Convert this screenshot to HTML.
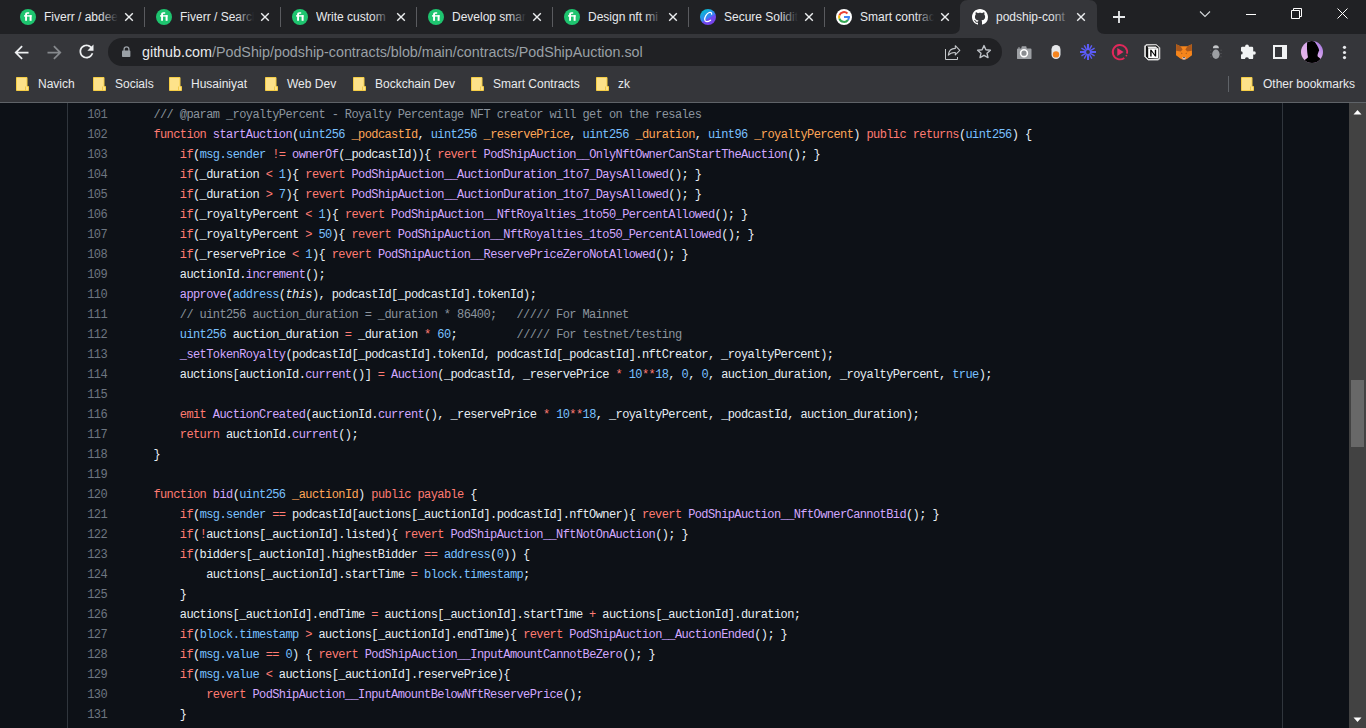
<!DOCTYPE html>
<html><head><meta charset="utf-8"><title>podship</title><style>
*{margin:0;padding:0;box-sizing:border-box}
html,body{width:1366px;height:728px;overflow:hidden;background:#0d1117;font-family:"Liberation Sans",sans-serif}
.ico{position:absolute;display:block}
#tabs{position:absolute;left:0;top:0;width:1366px;height:34px;background:#202124}
#toolbar{position:absolute;left:0;top:34px;width:1366px;height:35px;background:#35363a}
#bm{position:absolute;left:0;top:69px;width:1366px;height:33px;background:#35363a}
#omni{position:absolute;left:108px;top:38px;width:894px;height:28px;border-radius:14px;background:#202124}
#url{position:absolute;left:142px;top:43px;height:18px;line-height:18px;font-size:14.3px;color:#9aa0a6;white-space:nowrap}
.tt{position:absolute;top:9px;width:74px;height:16px;line-height:16px;font-size:12px;color:#e8eaed;white-space:nowrap;overflow:hidden}
.tt i{position:absolute;right:0;top:0;width:18px;height:16px}
.tsep{position:absolute;top:7px;width:1px;height:20px;background:#5a5b5f}
.bt{position:absolute;top:76px;height:16px;line-height:16px;font-size:12px;color:#e8eaed;white-space:nowrap}
.ln{position:absolute;left:67px;width:40px;height:20px;line-height:20px;text-align:right;font-family:"Liberation Mono",monospace;font-size:12px;letter-spacing:-0.6px;color:#6e7681;white-space:pre}
.cl{position:absolute;left:127px;height:20px;line-height:20px;font-family:"Liberation Mono",monospace;font-size:12px;letter-spacing:-0.6px;color:#e6edf3;white-space:pre}
.k{color:#ff7b72}.f{color:#d2a8ff}.c{color:#79c0ff}.v{color:#ffa657}.m{color:#8b949e}.i{font-style:italic}
</style></head><body>
<div id="tabs"></div>
<svg class="ico" style="left:0;top:0" width="1366" height="34"><path d="M952 34Q960 34 960 26L960 8Q960 0 968 0L1089 0Q1097 0 1097 8L1097 26Q1097 34 1105 34Z" fill="#35363a"/></svg>
<svg class="ico" style="left:20px;top:9px" width="16" height="16" viewBox="0 0 16 16"><circle cx="8" cy="8" r="8" fill="#1ec46f"/><path d="M5.1 11.8V5.3C5.1 4 5.9 3.3 7.2 3.3H9.2V4.8H7.6C7.2 4.8 7 5 7 5.4V11.8Z" fill="#fff"/><rect x="4" y="6.2" width="7.6" height="1.4" fill="#fff"/><rect x="9.6" y="6.2" width="2" height="5.6" fill="#fff"/></svg>
<div class="tt" style="left:44px">Fiverr / abdee<i style="background:linear-gradient(90deg,rgba(32,33,36,0),#202124)"></i></div>
<svg class="ico" style="left:123px;top:11px" width="12" height="12" viewBox="0 0 12 12"><path d="M2.7 2.7L9.3 9.3M9.3 2.7L2.7 9.3" stroke="#eceef0" stroke-width="1.4" stroke-linecap="square"/></svg>
<div class="tsep" style="left:144px"></div>
<svg class="ico" style="left:156px;top:9px" width="16" height="16" viewBox="0 0 16 16"><circle cx="8" cy="8" r="8" fill="#1ec46f"/><path d="M5.1 11.8V5.3C5.1 4 5.9 3.3 7.2 3.3H9.2V4.8H7.6C7.2 4.8 7 5 7 5.4V11.8Z" fill="#fff"/><rect x="4" y="6.2" width="7.6" height="1.4" fill="#fff"/><rect x="9.6" y="6.2" width="2" height="5.6" fill="#fff"/></svg>
<div class="tt" style="left:180px">Fiverr / Search<i style="background:linear-gradient(90deg,rgba(32,33,36,0),#202124)"></i></div>
<svg class="ico" style="left:259px;top:11px" width="12" height="12" viewBox="0 0 12 12"><path d="M2.7 2.7L9.3 9.3M9.3 2.7L2.7 9.3" stroke="#eceef0" stroke-width="1.4" stroke-linecap="square"/></svg>
<div class="tsep" style="left:280px"></div>
<svg class="ico" style="left:292px;top:9px" width="16" height="16" viewBox="0 0 16 16"><circle cx="8" cy="8" r="8" fill="#1ec46f"/><path d="M5.1 11.8V5.3C5.1 4 5.9 3.3 7.2 3.3H9.2V4.8H7.6C7.2 4.8 7 5 7 5.4V11.8Z" fill="#fff"/><rect x="4" y="6.2" width="7.6" height="1.4" fill="#fff"/><rect x="9.6" y="6.2" width="2" height="5.6" fill="#fff"/></svg>
<div class="tt" style="left:316px">Write custom<i style="background:linear-gradient(90deg,rgba(32,33,36,0),#202124)"></i></div>
<svg class="ico" style="left:395px;top:11px" width="12" height="12" viewBox="0 0 12 12"><path d="M2.7 2.7L9.3 9.3M9.3 2.7L2.7 9.3" stroke="#eceef0" stroke-width="1.4" stroke-linecap="square"/></svg>
<div class="tsep" style="left:416px"></div>
<svg class="ico" style="left:428px;top:9px" width="16" height="16" viewBox="0 0 16 16"><circle cx="8" cy="8" r="8" fill="#1ec46f"/><path d="M5.1 11.8V5.3C5.1 4 5.9 3.3 7.2 3.3H9.2V4.8H7.6C7.2 4.8 7 5 7 5.4V11.8Z" fill="#fff"/><rect x="4" y="6.2" width="7.6" height="1.4" fill="#fff"/><rect x="9.6" y="6.2" width="2" height="5.6" fill="#fff"/></svg>
<div class="tt" style="left:452px">Develop smar<i style="background:linear-gradient(90deg,rgba(32,33,36,0),#202124)"></i></div>
<svg class="ico" style="left:531px;top:11px" width="12" height="12" viewBox="0 0 12 12"><path d="M2.7 2.7L9.3 9.3M9.3 2.7L2.7 9.3" stroke="#eceef0" stroke-width="1.4" stroke-linecap="square"/></svg>
<div class="tsep" style="left:552px"></div>
<svg class="ico" style="left:564px;top:9px" width="16" height="16" viewBox="0 0 16 16"><circle cx="8" cy="8" r="8" fill="#1ec46f"/><path d="M5.1 11.8V5.3C5.1 4 5.9 3.3 7.2 3.3H9.2V4.8H7.6C7.2 4.8 7 5 7 5.4V11.8Z" fill="#fff"/><rect x="4" y="6.2" width="7.6" height="1.4" fill="#fff"/><rect x="9.6" y="6.2" width="2" height="5.6" fill="#fff"/></svg>
<div class="tt" style="left:588px">Design nft mi<i style="background:linear-gradient(90deg,rgba(32,33,36,0),#202124)"></i></div>
<svg class="ico" style="left:667px;top:11px" width="12" height="12" viewBox="0 0 12 12"><path d="M2.7 2.7L9.3 9.3M9.3 2.7L2.7 9.3" stroke="#eceef0" stroke-width="1.4" stroke-linecap="square"/></svg>
<div class="tsep" style="left:688px"></div>
<svg class="ico" style="left:700px;top:9px" width="16" height="16" viewBox="0 0 16 16"><defs><linearGradient id="cg" x1="0.2" y1="0" x2="0.8" y2="1"><stop offset="0" stop-color="#00c4cc"/><stop offset=".55" stop-color="#3d7cf5"/><stop offset=".6" stop-color="#6d4cf0"/><stop offset="1" stop-color="#7a3ee8"/></linearGradient></defs><circle cx="8" cy="8" r="8" fill="url(#cg)"/><path d="M11.6 5.2C11.9 3.6 10.6 2.9 9.2 3.5C6.6 4.6 4.4 8.2 4.7 10.8C5 13.2 7.8 13.1 10.6 11.2" fill="none" stroke="#fff" stroke-width="1.25" stroke-linecap="round"/></svg>
<div class="tt" style="left:724px">Secure Solidit<i style="background:linear-gradient(90deg,rgba(32,33,36,0),#202124)"></i></div>
<svg class="ico" style="left:803px;top:11px" width="12" height="12" viewBox="0 0 12 12"><path d="M2.7 2.7L9.3 9.3M9.3 2.7L2.7 9.3" stroke="#eceef0" stroke-width="1.4" stroke-linecap="square"/></svg>
<div class="tsep" style="left:824px"></div>
<svg class="ico" style="left:836px;top:9px" width="16" height="16" viewBox="0 0 16 16"><circle cx="8" cy="8" r="8" fill="#fff"/><g fill="none" stroke-width="2"><path d="M11.46 4.54A4.9 4.9 0 0 0 3.40 6.32" stroke="#ea4335"/><path d="M3.40 6.32A4.9 4.9 0 0 0 3.40 9.68" stroke="#fbbc05"/><path d="M3.40 9.68A4.9 4.9 0 0 0 12.01 10.81" stroke="#34a853"/><path d="M12.01 10.81A4.9 4.9 0 0 0 12.9 8" stroke="#4285f4"/></g><rect x="8" y="7" width="5.9" height="2" fill="#4285f4"/></svg>
<div class="tt" style="left:860px">Smart contrac<i style="background:linear-gradient(90deg,rgba(32,33,36,0),#202124)"></i></div>
<svg class="ico" style="left:939px;top:11px" width="12" height="12" viewBox="0 0 12 12"><path d="M2.7 2.7L9.3 9.3M9.3 2.7L2.7 9.3" stroke="#eceef0" stroke-width="1.4" stroke-linecap="square"/></svg>
<svg class="ico" style="left:972px;top:9px" width="16" height="16" viewBox="0 0 16 16"><path fill="#fff" d="M8 0C3.58 0 0 3.58 0 8c0 3.54 2.29 6.53 5.47 7.59.4.07.55-.17.55-.38 0-.19-.01-.82-.01-1.49-2.01.37-2.53-.49-2.69-.94-.09-.23-.48-.94-.82-1.13-.28-.15-.68-.52-.01-.53.63-.01 1.08.58 1.23.82.72 1.21 1.87.87 2.33.66.07-.52.28-.87.51-1.07-1.78-.2-3.64-.89-3.64-3.95 0-.87.31-1.59.82-2.15-.08-.2-.36-1.02.08-2.12 0 0 .67-.21 2.2.82.64-.18 1.32-.27 2-.27.68 0 1.36.09 2 .27 1.53-1.04 2.2-.82 2.2-.82.44 1.1.16 1.92.08 2.12.51.56.82 1.27.82 2.15 0 3.07-1.87 3.75-3.65 3.95.29.25.54.73.54 1.48 0 1.07-.01 1.93-.01 2.2 0 .21.15.46.55.38A8.013 8.013 0 0016 8c0-4.42-3.58-8-8-8z"/></svg>
<div class="tt" style="left:996px">podship-cont<i style="background:linear-gradient(90deg,rgba(53,54,58,0),#35363a)"></i></div>
<svg class="ico" style="left:1075px;top:11px" width="12" height="12" viewBox="0 0 12 12"><path d="M2.7 2.7L9.3 9.3M9.3 2.7L2.7 9.3" stroke="#eceef0" stroke-width="1.4" stroke-linecap="square"/></svg>
<svg class="ico" style="left:1112px;top:10px" width="14" height="14" viewBox="0 0 14 14"><path d="M7 1V13M1 7H13" stroke="#e8eaed" stroke-width="1.8"/></svg>
<svg class="ico" style="left:1199px;top:10px" width="12" height="8" viewBox="0 0 12 8"><path d="M1 1.5L6 6.5L11 1.5" fill="none" stroke="#d5d8db" stroke-width="1.1"/></svg>
<div style="position:absolute;left:1246px;top:14px;width:10px;height:1px;background:#fff"></div>
<svg class="ico" style="left:1291px;top:8px" width="12" height="12" viewBox="0 0 12 12"><path d="M0.5 2.5H8.5V10.5H0.5Z M2.5 2.5V0.5H10.5V8.5H8.5" fill="none" stroke="#fff" stroke-width="1"/></svg>
<svg class="ico" style="left:1337px;top:8px" width="12" height="12" viewBox="0 0 12 12"><path d="M0.5 0.5L10.5 10.5M10.5 0.5L0.5 10.5" stroke="#fff" stroke-width="1"/></svg>
<div id="toolbar"></div>
<svg class="ico" style="left:11px;top:41.6px" width="21" height="21" viewBox="0 0 24 24"><path d="M20 11H7.83l5.59-5.59L12 4l-8 8 8 8 1.41-1.41L7.83 13H20v-2z" fill="#eef0f2"/></svg>
<svg class="ico" style="left:44px;top:41.6px" width="21" height="21" viewBox="0 0 24 24"><path d="M12 4l-1.41 1.41L16.17 11H4v2h12.17l-5.58 5.59L12 20l8-8z" fill="#86898d"/></svg>
<svg class="ico" style="left:75.9px;top:41.4px" width="21" height="21" viewBox="0 0 24 24"><path d="M17.65 6.35C16.2 4.9 14.21 4 12 4c-4.42 0-7.99 3.58-7.99 8s3.57 8 7.99 8c3.73 0 6.840-2.550 7.730-6h-2.080c-.820 2.330-3.040 4-5.650 4-3.310 0-6-2.690-6-6s2.690-6 6-6c1.660 0 3.140.690 4.220 1.780L13 11h7V4l-2.350 2.350z" fill="#eef0f2"/></svg>
<div id="omni"></div>
<svg class="ico" style="left:121.8px;top:46px" width="9" height="11" viewBox="0 0 9 11"><path d="M2.1 5V3.3A2.4 2.4 0 0 1 6.9 3.3V5" fill="none" stroke="#9aa0a6" stroke-width="1.3"/><rect x="0" y="4.6" width="8.4" height="6.4" rx=".8" fill="#9aa0a6"/></svg>
<div id="url"><span style="color:#e8eaed">github.com</span>/PodShip/podship-contracts/blob/main/contracts/PodShipAuction.sol</div>
<svg class="ico" style="left:940px;top:40px" width="24" height="24" viewBox="0 0 24 24"><path d="M5.5 9V19.5H17.5V17" fill="none" stroke="#c4c7ca" stroke-width="1"/><path d="M8.3 15.2C8.8 11 11.5 8.4 15.3 8.4V5.7L19.8 10.3L15.3 14.9V12.5C12.3 12.3 10 13.2 8.3 15.2Z" fill="none" stroke="#c4c7ca" stroke-width="1.1" stroke-linejoin="round"/></svg>
<svg class="ico" style="left:976px;top:44px" width="16" height="16" viewBox="0 0 16 16"><path d="M8 1.6L9.9 5.8L14.4 6.2L11 9.2L12 13.6L8 11.3L4 13.6L5 9.2L1.6 6.2L6.1 5.8Z" fill="none" stroke="#bdc1c6" stroke-width="1.4" stroke-linejoin="round"/></svg>
<svg class="ico" style="left:1012px;top:40px" width="24" height="24" viewBox="0 0 24 24"><path d="M5 9.6Q5 8.6 6 8.6H9.2L9.8 6.2H14.2L14.8 8.6H18.5Q19.5 8.6 19.5 9.6V18.2Q19.5 19.1 18.5 19.1H6Q5 19.1 5 18.2Z" fill="#9da0a4"/><path d="M6 8.6V7.4H8V8.6Z" fill="#9da0a4"/><circle cx="12" cy="13.2" r="3.4" fill="#8a8d91" stroke="#fff" stroke-width="1.6"/></svg>
<svg class="ico" style="left:1044px;top:40px" width="24" height="24" viewBox="0 0 24 24"><rect x="7.5" y="5" width="9" height="14" rx="4.5" fill="#e6e7e9"/><circle cx="12" cy="14.4" r="3.2" fill="#f5841f"/></svg>
<svg class="ico" style="left:1076px;top:40px" width="24" height="24" viewBox="0 0 24 24"><path d="M14.80 12.00L20.00 12.00" stroke="#5c5cf7" stroke-width="2.0"/><path d="M14.86 13.65L18.58 15.80" stroke="#5c5cf7" stroke-width="1.4"/><path d="M13.65 14.86L15.80 18.58" stroke="#5c5cf7" stroke-width="1.4"/><path d="M12.00 14.80L12.00 20.00" stroke="#5c5cf7" stroke-width="2.0"/><path d="M10.35 14.86L8.20 18.58" stroke="#5c5cf7" stroke-width="1.4"/><path d="M9.14 13.65L5.42 15.80" stroke="#5c5cf7" stroke-width="1.4"/><path d="M9.20 12.00L4.00 12.00" stroke="#5c5cf7" stroke-width="2.0"/><path d="M9.14 10.35L5.42 8.20" stroke="#5c5cf7" stroke-width="1.4"/><path d="M10.35 9.14L8.20 5.42" stroke="#5c5cf7" stroke-width="1.4"/><path d="M12.00 9.20L12.00 4.00" stroke="#5c5cf7" stroke-width="2.0"/><path d="M13.65 9.14L15.80 5.42" stroke="#5c5cf7" stroke-width="1.4"/><path d="M14.86 10.35L18.58 8.20" stroke="#5c5cf7" stroke-width="1.4"/><circle cx="12" cy="12" r="2.6" fill="none" stroke="#5c5cf7" stroke-width="1.4"/></svg>
<svg class="ico" style="left:1108px;top:40px" width="24" height="24" viewBox="0 0 24 24"><path d="M16.3 17.9A7.2 7.2 0 1 1 19 13.6" fill="none" stroke="#e0285a" stroke-width="1.9"/><circle cx="18.4" cy="15.6" r=".9" fill="#e0285a"/><path d="M9.3 8.1L15.6 12L9.3 15.9Z" fill="#e8306a"/></svg>
<svg class="ico" style="left:1140px;top:40px" width="24" height="24" viewBox="0 0 24 24"><path d="M6.2 4.5H16.2L19.8 7.6V18.6L18.4 20H8L4.6 16.6V6.1Z" fill="#fff" stroke="#c8c8c8" stroke-width="1"/><path d="M6.6 5.6L16 5.2L18.6 7.2V18.4L8.4 19L5.8 16.4V6.4Z" fill="#111"/><path d="M8.2 8.2H18V18.1H8.2Z" fill="#fff"/><path d="M7.4 6.6H15.8L17.4 7.9H8.2Z" fill="#eee"/><path d="M10.2 16.5V9.8H11.4L14.8 14.6V9.8H16.2V16.5H15L11.6 11.7V16.5Z" fill="#000"/></svg>
<svg class="ico" style="left:1172px;top:40px" width="24" height="24" viewBox="0 0 24 24"><path d="M4.2 4.2L8.5 6.3H15.5L19.8 4.2L20 15.2L15.6 18.6L13.6 19.6H10.4L8.4 18.6L4 15.2Z" fill="#f6851b"/><path d="M4.2 4.2L8.5 6.3L10.6 9.6L8.8 11.6L4.1 10.8Z" fill="#a9581c"/><path d="M19.8 4.2L15.5 6.3L13.4 9.6L15.2 11.6L19.9 10.8Z" fill="#a9581c"/><path d="M8.8 12.6L10.8 13.2L9.4 14.2ZM15.2 12.6L13.2 13.2L14.6 14.2Z" fill="#b4601c"/><path d="M10.2 17.2H13.8L13.2 19.6H10.8Z" fill="#c9c3d0"/><path d="M11 17H13L12 18Z" fill="#111"/></svg>
<svg class="ico" style="left:1204px;top:40px" width="24" height="24" viewBox="0 0 24 24"><path d="M8.9 8.2A3 2.9 0 0 1 14.9 8.2Z" fill="#c4c6c9"/><ellipse cx="11.9" cy="14.2" rx="3.7" ry="4.7" fill="#9c9fa3"/><path d="M6 10.2H7.4M6 13.5H7.6M6.2 16.8H7.6M16.4 10.2H17.8M16.2 13.5H17.8M16.2 16.8H17.6" stroke="#55575b" stroke-width=".8"/></svg>
<svg class="ico" style="left:1236px;top:40px" width="24" height="24" viewBox="0 0 24 24"><rect x="5" y="6.8" width="12.2" height="12.3" rx="1.2" fill="#f1f3f4"/><circle cx="11" cy="6.4" r="1.9" fill="#f1f3f4"/><circle cx="18" cy="13" r="1.8" fill="#f1f3f4"/><circle cx="5" cy="12.9" r="1.7" fill="#35363a"/><circle cx="10.9" cy="19.2" r="2" fill="#35363a"/></svg>
<svg class="ico" style="left:1273px;top:45px" width="14" height="14" viewBox="0 0 14 14"><path d="M0 0H14V14H0ZM2 2V12H9V2Z" fill="#f1f3f4" fill-rule="evenodd"/></svg>
<svg class="ico" style="left:1301px;top:41px" width="22" height="22" viewBox="0 0 22 22"><defs><linearGradient id="av" x1="1" y1="0" x2="0" y2="1"><stop offset="0" stop-color="#9b6be0"/><stop offset=".45" stop-color="#d9a8ec"/><stop offset="1" stop-color="#ecbcea"/></linearGradient><clipPath id="avc"><circle cx="11" cy="11" r="11"/></clipPath></defs><circle cx="11" cy="11" r="11" fill="url(#av)"/><g clip-path="url(#avc)"><path d="M6.2 1.2C8 -.3 12 -.4 13.6 .8C15.2 3 17.6 6.5 18.2 9.2C17.4 11.2 16.3 13.2 16.6 15.2C18.2 17 21.5 18.5 22 22H1C1.8 19.5 5.2 18.6 7 16.2C6.2 12.5 5.6 6 6.2 1.2Z" fill="#000"/></g></svg>
<svg class="ico" style="left:1342px;top:44px" width="6" height="16" viewBox="0 0 6 16"><circle cx="2.5" cy="3.3" r="1.6" fill="#e8eaed"/><circle cx="2.5" cy="8.5" r="1.6" fill="#e8eaed"/><circle cx="2.5" cy="13.6" r="1.6" fill="#e8eaed"/></svg>
<div id="bm"></div>
<svg class="ico" style="left:16px;top:77px" width="13" height="14" viewBox="0 0 13 14"><path d="M0.5 0.5H11V9.5H12.5V13.5H0.5Z" fill="#fde28a" stroke="#f5cd45" stroke-width="1"/><path d="M9.5 9.5V13.5" stroke="#f0c94a" stroke-width="1"/></svg>
<div class="bt" style="left:38px">Navich</div>
<svg class="ico" style="left:93px;top:77px" width="13" height="14" viewBox="0 0 13 14"><path d="M0.5 0.5H11V9.5H12.5V13.5H0.5Z" fill="#fde28a" stroke="#f5cd45" stroke-width="1"/><path d="M9.5 9.5V13.5" stroke="#f0c94a" stroke-width="1"/></svg>
<div class="bt" style="left:115px">Socials</div>
<svg class="ico" style="left:169px;top:77px" width="13" height="14" viewBox="0 0 13 14"><path d="M0.5 0.5H11V9.5H12.5V13.5H0.5Z" fill="#fde28a" stroke="#f5cd45" stroke-width="1"/><path d="M9.5 9.5V13.5" stroke="#f0c94a" stroke-width="1"/></svg>
<div class="bt" style="left:191px">Husainiyat</div>
<svg class="ico" style="left:265px;top:77px" width="13" height="14" viewBox="0 0 13 14"><path d="M0.5 0.5H11V9.5H12.5V13.5H0.5Z" fill="#fde28a" stroke="#f5cd45" stroke-width="1"/><path d="M9.5 9.5V13.5" stroke="#f0c94a" stroke-width="1"/></svg>
<div class="bt" style="left:287px">Web Dev</div>
<svg class="ico" style="left:353px;top:77px" width="13" height="14" viewBox="0 0 13 14"><path d="M0.5 0.5H11V9.5H12.5V13.5H0.5Z" fill="#fde28a" stroke="#f5cd45" stroke-width="1"/><path d="M9.5 9.5V13.5" stroke="#f0c94a" stroke-width="1"/></svg>
<div class="bt" style="left:375px">Bockchain Dev</div>
<svg class="ico" style="left:471px;top:77px" width="13" height="14" viewBox="0 0 13 14"><path d="M0.5 0.5H11V9.5H12.5V13.5H0.5Z" fill="#fde28a" stroke="#f5cd45" stroke-width="1"/><path d="M9.5 9.5V13.5" stroke="#f0c94a" stroke-width="1"/></svg>
<div class="bt" style="left:493px">Smart Contracts</div>
<svg class="ico" style="left:596px;top:77px" width="13" height="14" viewBox="0 0 13 14"><path d="M0.5 0.5H11V9.5H12.5V13.5H0.5Z" fill="#fde28a" stroke="#f5cd45" stroke-width="1"/><path d="M9.5 9.5V13.5" stroke="#f0c94a" stroke-width="1"/></svg>
<div class="bt" style="left:618px">zk</div>
<div style="position:absolute;left:1228px;top:76px;width:1px;height:16px;background:#5f6368"></div>
<svg class="ico" style="left:1241px;top:77px" width="13" height="14" viewBox="0 0 13 14"><path d="M0.5 0.5H11V9.5H12.5V13.5H0.5Z" fill="#fde28a" stroke="#f5cd45" stroke-width="1"/><path d="M9.5 9.5V13.5" stroke="#f0c94a" stroke-width="1"/></svg>
<div class="bt" style="left:1263px">Other bookmarks</div>
<div style="position:absolute;left:0;top:102px;width:1366px;height:1px;background:#5f6368"></div>
<div style="position:absolute;left:67px;top:103px;width:1px;height:625px;background:#30363d"></div>
<div style="position:absolute;left:1282px;top:103px;width:1px;height:625px;background:#30363d"></div>
<div class="ln" style="top:105px">101</div>
<div class="ln" style="top:125px">102</div>
<div class="ln" style="top:145px">103</div>
<div class="ln" style="top:165px">104</div>
<div class="ln" style="top:185px">105</div>
<div class="ln" style="top:205px">106</div>
<div class="ln" style="top:225px">107</div>
<div class="ln" style="top:245px">108</div>
<div class="ln" style="top:265px">109</div>
<div class="ln" style="top:285px">110</div>
<div class="ln" style="top:305px">111</div>
<div class="ln" style="top:325px">112</div>
<div class="ln" style="top:345px">113</div>
<div class="ln" style="top:365px">114</div>
<div class="ln" style="top:385px">115</div>
<div class="ln" style="top:405px">116</div>
<div class="ln" style="top:425px">117</div>
<div class="ln" style="top:445px">118</div>
<div class="ln" style="top:465px">119</div>
<div class="ln" style="top:485px">120</div>
<div class="ln" style="top:505px">121</div>
<div class="ln" style="top:525px">122</div>
<div class="ln" style="top:545px">123</div>
<div class="ln" style="top:565px">124</div>
<div class="ln" style="top:585px">125</div>
<div class="ln" style="top:605px">126</div>
<div class="ln" style="top:625px">127</div>
<div class="ln" style="top:645px">128</div>
<div class="ln" style="top:665px">129</div>
<div class="ln" style="top:685px">130</div>
<div class="ln" style="top:705px">131</div>
<div class="cl" style="top:105px">    <span class="m">/// @param _royaltyPercent - Royalty Percentage NFT creator will get on the resales</span></div>
<div class="cl" style="top:125px">    <span class="k">function</span> <span class="f">startAuction</span>(<span class="c">uint256</span> <span class="v">_podcastId</span>, <span class="c">uint256</span> <span class="v">_reservePrice</span>, <span class="c">uint256</span> <span class="v">_duration</span>, <span class="c">uint96</span> <span class="v">_royaltyPercent</span>) <span class="k">public</span> <span class="k">returns</span>(<span class="c">uint256</span>) {</div>
<div class="cl" style="top:145px">        <span class="k">if</span>(<span class="c">msg.sender</span> <span class="k">!=</span> <span class="f">ownerOf</span>(_podcastId)){ <span class="k">revert</span> <span class="f">PodShipAuction__OnlyNftOwnerCanStartTheAuction</span>(); }</div>
<div class="cl" style="top:165px">        <span class="k">if</span>(_duration <span class="k">&lt;</span> <span class="c">1</span>){ <span class="k">revert</span> <span class="f">PodShipAuction__AuctionDuration_1to7_DaysAllowed</span>(); }</div>
<div class="cl" style="top:185px">        <span class="k">if</span>(_duration <span class="k">&gt;</span> <span class="c">7</span>){ <span class="k">revert</span> <span class="f">PodShipAuction__AuctionDuration_1to7_DaysAllowed</span>(); }</div>
<div class="cl" style="top:205px">        <span class="k">if</span>(_royaltyPercent <span class="k">&lt;</span> <span class="c">1</span>){ <span class="k">revert</span> <span class="f">PodShipAuction__NftRoyalties_1to50_PercentAllowed</span>(); }</div>
<div class="cl" style="top:225px">        <span class="k">if</span>(_royaltyPercent <span class="k">&gt;</span> <span class="c">50</span>){ <span class="k">revert</span> <span class="f">PodShipAuction__NftRoyalties_1to50_PercentAllowed</span>(); }</div>
<div class="cl" style="top:245px">        <span class="k">if</span>(_reservePrice <span class="k">&lt;</span> <span class="c">1</span>){ <span class="k">revert</span> <span class="f">PodShipAuction__ReservePriceZeroNotAllowed</span>(); }</div>
<div class="cl" style="top:265px">        auctionId.<span class="f">increment</span>();</div>
<div class="cl" style="top:285px">        <span class="f">approve</span>(<span class="c">address</span>(<span class="i">this</span>), podcastId[_podcastId].tokenId);</div>
<div class="cl" style="top:305px">        <span class="m">// uint256 auction_duration = _duration * 86400;   ///// For Mainnet</span></div>
<div class="cl" style="top:325px">        <span class="c">uint256</span> auction_duration <span class="k">=</span> _duration <span class="k">*</span> <span class="c">60</span>;         <span class="m">///// For testnet/testing</span></div>
<div class="cl" style="top:345px">        <span class="f">_setTokenRoyalty</span>(podcastId[_podcastId].tokenId, podcastId[_podcastId].nftCreator, _royaltyPercent);</div>
<div class="cl" style="top:365px">        auctions[auctionId.<span class="f">current</span>()] <span class="k">=</span> <span class="f">Auction</span>(_podcastId, _reservePrice <span class="k">*</span> <span class="c">10</span><span class="k">**</span><span class="c">18</span>, <span class="c">0</span>, <span class="c">0</span>, auction_duration, _royaltyPercent, <span class="c">true</span>);</div>
<div class="cl" style="top:385px"></div>
<div class="cl" style="top:405px">        <span class="k">emit</span> <span class="f">AuctionCreated</span>(auctionId.<span class="f">current</span>(), _reservePrice <span class="k">*</span> <span class="c">10</span><span class="k">**</span><span class="c">18</span>, _royaltyPercent, _podcastId, auction_duration);</div>
<div class="cl" style="top:425px">        <span class="k">return</span> auctionId.<span class="f">current</span>();</div>
<div class="cl" style="top:445px">    }</div>
<div class="cl" style="top:465px"></div>
<div class="cl" style="top:485px">    <span class="k">function</span> <span class="f">bid</span>(<span class="c">uint256</span> <span class="v">_auctionId</span>) <span class="k">public</span> <span class="k">payable</span> {</div>
<div class="cl" style="top:505px">        <span class="k">if</span>(<span class="c">msg.sender</span> <span class="k">==</span> podcastId[auctions[_auctionId].podcastId].nftOwner){ <span class="k">revert</span> <span class="f">PodShipAuction__NftOwnerCannotBid</span>(); }</div>
<div class="cl" style="top:525px">        <span class="k">if</span>(<span class="k">!</span>auctions[_auctionId].listed){ <span class="k">revert</span> <span class="f">PodShipAuction__NftNotOnAuction</span>(); }</div>
<div class="cl" style="top:545px">        <span class="k">if</span>(bidders[_auctionId].highestBidder <span class="k">==</span> <span class="c">address</span>(<span class="c">0</span>)) {</div>
<div class="cl" style="top:565px">            auctions[_auctionId].startTime <span class="k">=</span> <span class="c">block.timestamp</span>;</div>
<div class="cl" style="top:585px">        }</div>
<div class="cl" style="top:605px">        auctions[_auctionId].endTime <span class="k">=</span> auctions[_auctionId].startTime <span class="k">+</span> auctions[_auctionId].duration;</div>
<div class="cl" style="top:625px">        <span class="k">if</span>(<span class="c">block.timestamp</span> <span class="k">&gt;</span> auctions[_auctionId].endTime){ <span class="k">revert</span> <span class="f">PodShipAuction__AuctionEnded</span>(); }</div>
<div class="cl" style="top:645px">        <span class="k">if</span>(<span class="c">msg.value</span> <span class="k">==</span> <span class="c">0</span>) { <span class="k">revert</span> <span class="f">PodShipAuction__InputAmountCannotBeZero</span>(); }</div>
<div class="cl" style="top:665px">        <span class="k">if</span>(<span class="c">msg.value</span> <span class="k">&lt;</span> auctions[_auctionId].reservePrice){</div>
<div class="cl" style="top:685px">            <span class="k">revert</span> <span class="f">PodShipAuction__InputAmountBelowNftReservePrice</span>();</div>
<div class="cl" style="top:705px">        }</div>
<div style="position:absolute;left:1349px;top:103px;width:17px;height:625px;background:#424242"></div>
<div style="position:absolute;left:1351px;top:380px;width:13px;height:67px;background:#686868"></div>
<svg class="ico" style="left:1353px;top:108.5px" width="9" height="6" viewBox="0 0 9 6"><path d="M0.5 5.5L4.5 1L8.5 5.5Z" fill="#fff"/></svg>
<svg class="ico" style="left:1353px;top:716.5px" width="9" height="6" viewBox="0 0 9 6"><path d="M0.5 0.5L4.5 5L8.5 0.5Z" fill="#fff"/></svg>
</body></html>
